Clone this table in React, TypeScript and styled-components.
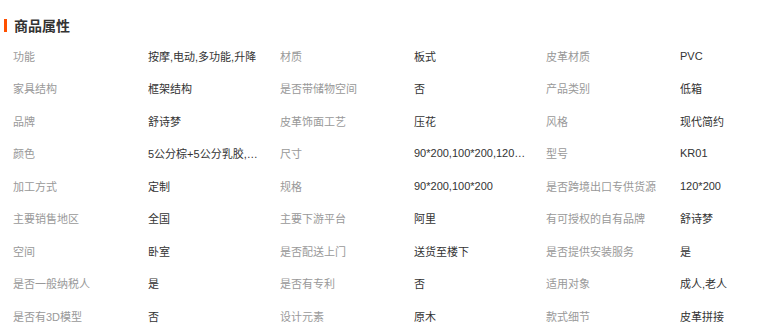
import React from "react";
import styled, { createGlobalStyle } from "styled-components";

const Global = createGlobalStyle`
  html, body { margin: 0; padding: 0; background: #fff; }
  body {
    font-family: "Liberation Sans", "Noto Sans CJK SC", sans-serif;
    overflow: hidden;
  }
`;

const Panel = styled.section`
  width: 800px;
  padding-top: 11px;
`;

const Title = styled.h3`
  display: flex;
  align-items: center;
  gap: 7px;
  margin: 0 0 0 4px;
  height: 28px;
  font-size: 14px;
  font-weight: 700;
  color: #333;
  &::before {
    content: "";
    display: block;
    width: 3px;
    height: 13px;
    background: #ff5000;
  }
`;

const Grid = styled.div`
  display: grid;
  grid-template-columns: 135px 132px 134px 132px 134px 133px;
  grid-auto-rows: 32.5px;
  margin-top: 0.5px;
`;

const Cell = styled.div<{ $label?: boolean }>`
  display: flex;
  align-items: center;
  padding: ${(p) => (p.$label ? "0 0 0 13px" : "0 7px 0 13px")};
  min-width: 0;
  font-size: 11px;
  color: ${(p) => (p.$label ? "#999" : "#333")};
  span {
    white-space: nowrap;
    overflow: hidden;
    text-overflow: ellipsis;
  }
`;

const rows: [string, string][][] = [
  [["功能", "按摩,电动,多功能,升降"], ["材质", "板式"], ["皮革材质", "PVC"]],
  [["家具结构", "框架结构"], ["是否带储物空间", "否"], ["产品类别", "低箱"]],
  [["品牌", "舒诗梦"], ["皮革饰面工艺", "压花"], ["风格", "现代简约"]],
  [["颜色", "5公分棕+5公分乳胶,5公分棕+3公分乳胶"], ["尺寸", "90*200,100*200,120*200,150*200"], ["型号", "KR01"]],
  [["加工方式", "定制"], ["规格", "90*200,100*200"], ["是否跨境出口专供货源", "120*200"]],
  [["主要销售地区", "全国"], ["主要下游平台", "阿里"], ["有可授权的自有品牌", "舒诗梦"]],
  [["空间", "卧室"], ["是否配送上门", "送货至楼下"], ["是否提供安装服务", "是"]],
  [["是否一般纳税人", "是"], ["是否有专利", "否"], ["适用对象", "成人,老人"]],
  [["是否有3D模型", "否"], ["设计元素", "原木"], ["款式细节", "皮革拼接"]],
];

export default function App() {
  return (
    <>
      <Global />
      <Panel>
        <Title>商品属性</Title>
        <Grid>
          {rows.map((row, i) =>
            row.map(([k, v], j) => (
              <React.Fragment key={`${i}-${j}`}>
                <Cell $label>
                  <span>{k}</span>
                </Cell>
                <Cell>
                  <span>{v}</span>
                </Cell>
              </React.Fragment>
            ))
          )}
        </Grid>
      </Panel>
    </>
  );
}
